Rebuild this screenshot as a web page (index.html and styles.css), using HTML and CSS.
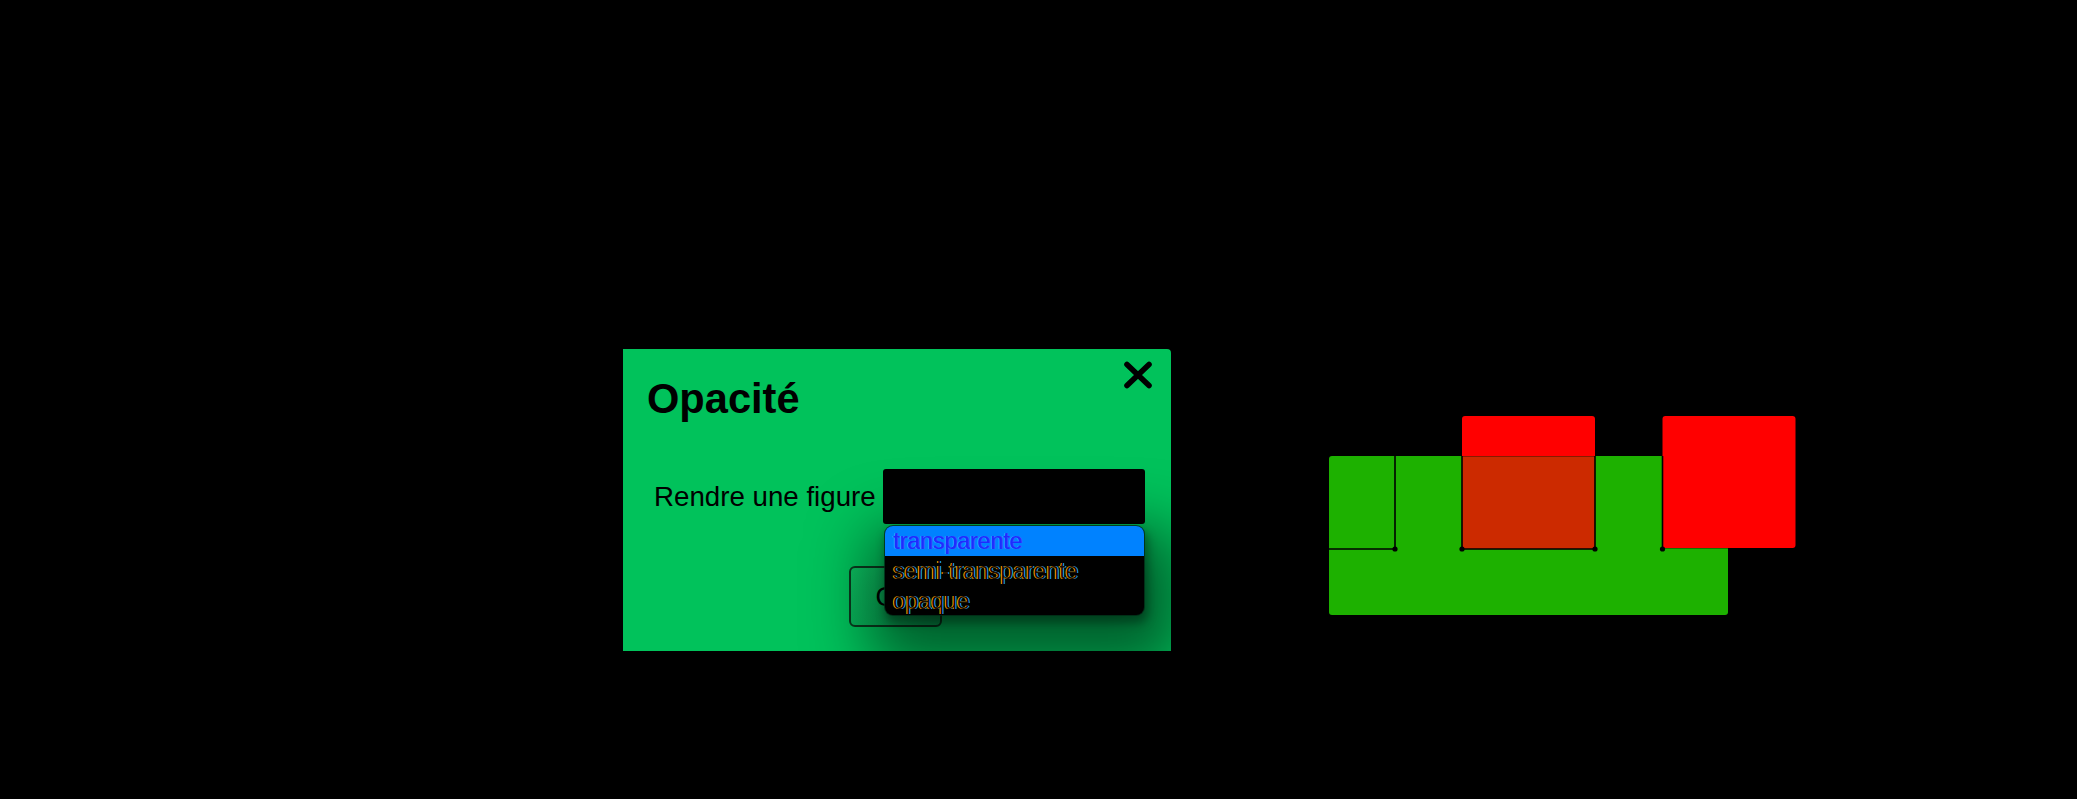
FILE: index.html
```html
<!DOCTYPE html>
<html lang="fr">
<head>
<meta charset="utf-8">
<title>Opacité</title>
<link rel="stylesheet" href="styles.css">
</head>
<body>
<main class="stage">
  <section class="dialog">
    <button class="close" aria-label="Fermer">
      <svg width="30" height="28" viewBox="0 0 30 28"><path d="M4 3.5 L26 24.5 M26 3.5 L4 24.5" stroke="#000" stroke-width="5.6" stroke-linecap="round"/></svg>
    </button>
    <h2 class="title">Opacité</h2>
    <div class="row">
      <span class="label">Rendre une figure</span>
      <div class="select"></div>
    </div>
    <div class="footer">
      <button class="ok">OK</button>
    </div>
    <ul class="dropdown">
      <li class="opt active">transparente</li>
      <li class="opt">semi-transparente</li>
      <li class="opt">opaque</li>
    </ul>
  </section>
  <svg class="figure" width="467" height="201" viewBox="0 0 467 201">
    <rect x="0" y="40" width="399" height="159" rx="3" fill="#1db100"/>
    <rect x="133" y="0" width="133" height="133" rx="3" fill="#ff0000"/>
    <rect x="133" y="40" width="133" height="93" fill="#cc2a00"/>
    <rect x="333.5" y="0" width="133" height="132" rx="3" fill="#ff0000"/>
    <g stroke="#000" stroke-width="1.6" fill="none">
      <path d="M66 40 V133 H0"/>
      <path d="M133 40 V133 H266 V40"/>
      <path d="M333.5 40 V133"/>
    </g>
    <g stroke="#000" stroke-opacity="0.35" stroke-width="1" fill="none">
      <path d="M133 40.5 H266"/>
      <path d="M334 132.5 H464"/>
    </g>
    <g fill="#000">
      <circle cx="66" cy="133" r="2.6"/>
      <circle cx="133" cy="133" r="2.6"/>
      <circle cx="266" cy="133" r="2.6"/>
      <circle cx="333.5" cy="133" r="2.6"/>
    </g>
  </svg>
</main>
</body>
</html>
```
FILE: styles.css
```css
html, body {
  margin: 0;
  padding: 0;
  background: #000;
}

body {
  width: 2077px;
  height: 799px;
  overflow: hidden;
  font-family: "Liberation Sans", Arial, sans-serif;
}

.stage {
  display: flex;
  align-items: flex-start;
  gap: 158px;
  padding: 349px 0 0 623px;
}

.dialog {
  position: relative;
  box-sizing: border-box;
  width: 548px;
  height: 302px;
  flex: none;
  background: #01c25b;
  border-radius: 0 4px 0 0;
  overflow: hidden;
  padding: 26px 0 0 24px;
  display: flex;
  flex-direction: column;
}

.close {
  position: absolute;
  top: 12px;
  right: 18px;
  width: 30px;
  height: 28px;
  padding: 0;
  border: 0;
  background: none;
  display: block;
}

.close svg {
  display: block;
}

.title {
  margin: 0;
  font-size: 41.6px;
  line-height: 48px;
  font-weight: bold;
  color: #000;
}

.row {
  display: flex;
  align-items: center;
  gap: 7px;
  margin: 46px 0 0 7px;
  height: 55px;
}

.label {
  font-size: 27.7px;
  line-height: 32px;
  color: #000;
  white-space: nowrap;
}

.select {
  width: 262px;
  height: 55px;
  background: #000;
  border-radius: 3px;
}

.footer {
  display: flex;
  justify-content: center;
  margin: 42px 0 0 -24px;
}

.ok {
  box-sizing: border-box;
  width: 93px;
  height: 61px;
  margin-left: -3px;
  border: 2px solid #0b3a1e;
  border-radius: 6px;
  background: linear-gradient(160deg, #0cbf60 0%, #06ad56 100%);
  font-family: "Liberation Sans", Arial, sans-serif;
  font-size: 27.7px;
  color: #000;
  padding: 0;
}

.dropdown {
  position: absolute;
  left: 262px;
  top: 177px;
  width: 259px;
  margin: 0;
  padding: 0;
  list-style: none;
  background: #000;
  border-radius: 8px;
  overflow: hidden;
  box-shadow: 0 0 0 1px rgba(0, 40, 20, 0.75), 2px 6px 10px 2px rgba(0, 0, 0, 0.35), 10px 28px 60px 26px rgba(0, 0, 0, 0.5);
}

.opt {
  box-sizing: border-box;
  height: 30px;
  line-height: 30px;
  padding-left: 8px;
  font-size: 23px;
  color: #1a1000;
  white-space: nowrap;
  text-shadow: -1px 0 #ffa200, 1px 0 #1aa6ff;
}

.opt:last-child {
  height: 29px;
}

.opt.active {
  background: #0082ff;
  color: #1d2cff;
  text-shadow: -1px 0 #2fb0ff, 1px 0 #3a40ff;
}

.figure {
  flex: none;
  margin-top: 67px;
  display: block;
}
```
